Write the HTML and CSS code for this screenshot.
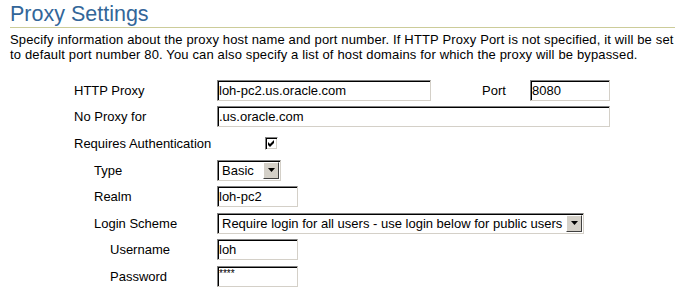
FILE: index.html
```html
<!DOCTYPE html>
<html lang="en">

<head>
  <meta charset="UTF-8">
  <title>Proxy Settings</title>
  <link rel="stylesheet" href="styles.css">
</head>

<body>
  <div class="page">
    <h1 class="page-tit">Proxy Settings</h1>
    <p class="desc">Specify information about the proxy host name and port number. If HTTP Proxy Port is not specified, it will be set to default port number 80. You can also specify a list of host domains for which the proxy will be bypassed.</p>

    <div class="form">
      <div class="row">
        <label class="lbl">HTTP Proxy</label>
        <input class="txt w-host" type="text" value="loh-pc2.us.oracle.com">
        <label class="lbl-port">Port</label>
        <input class="txt w-port" type="text" value="8080">
      </div>
      <div class="row">
        <label class="lbl">No Proxy for</label>
        <input class="txt w-long" type="text" value=".us.oracle.com">
      </div>
      <div class="row">
        <label class="lbl-auto">Requires Authentication</label>
        <span class="chk">
          <svg width="7" height="7" viewBox="0 0 7 7"><path d="M0 2 L2 4 L6 0 L6 3 L2 7 L0 5 Z" fill="#000"/></svg>
        </span>
      </div>
      <!-- 认证选项 -->
      <div class="row">
        <label class="lbl sub">Type</label>
        <div class="sel w-type">
          <span class="sel-val">Basic</span>
          <span class="sel-btn"><svg width="7" height="4" viewBox="0 0 7 4"><path d="M0 0 H7 L3.5 4 Z" fill="#000"/></svg></span>
        </div>
      </div>
      <div class="row">
        <label class="lbl sub">Realm</label>
        <input class="txt w-short" type="text" value="loh-pc2">
      </div>
      <div class="row">
        <label class="lbl sub">Login Scheme</label>
        <div class="sel w-scheme">
          <span class="sel-val">Require login for all users - use login below for public users</span>
          <span class="sel-btn"><svg width="7" height="4" viewBox="0 0 7 4"><path d="M0 0 H7 L3.5 4 Z" fill="#000"/></svg></span>
        </div>
      </div>
      <div class="row">
        <label class="lbl sub2">Username</label>
        <input class="txt w-short" type="text" value="loh">
      </div>
      <div class="row">
        <label class="lbl sub2">Password</label>
        <input class="txt w-short pwd" type="text" value="****">
      </div>
    </div>
  </div>
</body>

</html>
```

FILE: styles.css
```css
body,
h1,
p {
  margin: 0;
}

body {
  background-color: #fff;
  font-family: "Liberation Sans", Arial, sans-serif;
  color: #000;
}

.page {
  padding: 0 11px 0 10px;
}

.page-tit {
  font-size: 21.5px;
  font-weight: normal;
  line-height: 25px;
  padding-top: 2px;
  color: #336699;
  border-bottom: 1px solid #cccc99;
}

.desc {
  font-size: 13px;
  line-height: 15px;
  letter-spacing: 0.15px;
  margin-top: 4px;
}

.form {
  margin-top: 15px;
  margin-left: 64px;
  font-size: 13px;
}

.row {
  display: flex;
  align-items: center;
  height: 26.6px;
}

.lbl {
  width: 143px;
  flex: none;
}

.lbl.sub {
  padding-left: 20px;
  width: 123px;
}

.lbl.sub2 {
  padding-left: 36px;
  width: 107px;
}

.lbl-auto {
  width: 191px;
}

.lbl-port {
  margin-left: 51px;
  width: 48px;
}

.txt {
  box-sizing: border-box;
  height: 21px;
  padding: 0 1px;
  margin: 0;
  font: 13px "Liberation Sans", Arial, sans-serif;
  color: #000;
  background: #fff;
  border: 1px solid;
  border-color: #808080 #d4d0c8 #d4d0c8 #808080;
  box-shadow: inset 1px 1px 0 #000;
  outline: none;
}

.w-host {
  width: 214px;
}

.w-port {
  width: 80px;
}

.w-long {
  width: 393px;
}

.w-short {
  width: 81px;
}

.pwd {
  font-size: 10px;
  padding-bottom: 6px;
}

.chk {
  box-sizing: border-box;
  width: 13px;
  height: 13px;
  display: inline-flex;
  align-items: center;
  justify-content: center;
  background: #fff;
  border: 1px solid;
  border-color: #808080 #fff #fff #808080;
  box-shadow: inset 1px 1px 0 #000, inset -1px -1px 0 #d4d0c8;
}

.sel {
  box-sizing: border-box;
  height: 21px;
  display: flex;
  align-items: center;
  background: #fff;
  border: 1px solid;
  border-color: #808080 #d4d0c8 #d4d0c8 #808080;
  box-shadow: inset 1px 1px 0 #000;
  padding: 1px 1px 1px 2px;
}

.sel-val {
  flex: 1;
  white-space: nowrap;
  overflow: hidden;
  padding-left: 2px;
}

.sel-btn {
  box-sizing: border-box;
  width: 16px;
  height: 17px;
  display: flex;
  align-items: center;
  justify-content: center;
  background: #d4d0c8;
  border: 1px solid;
  border-color: #fff #404040 #404040 #fff;
}

.w-type {
  width: 64px;
}

.w-scheme {
  width: 367px;
}
```
